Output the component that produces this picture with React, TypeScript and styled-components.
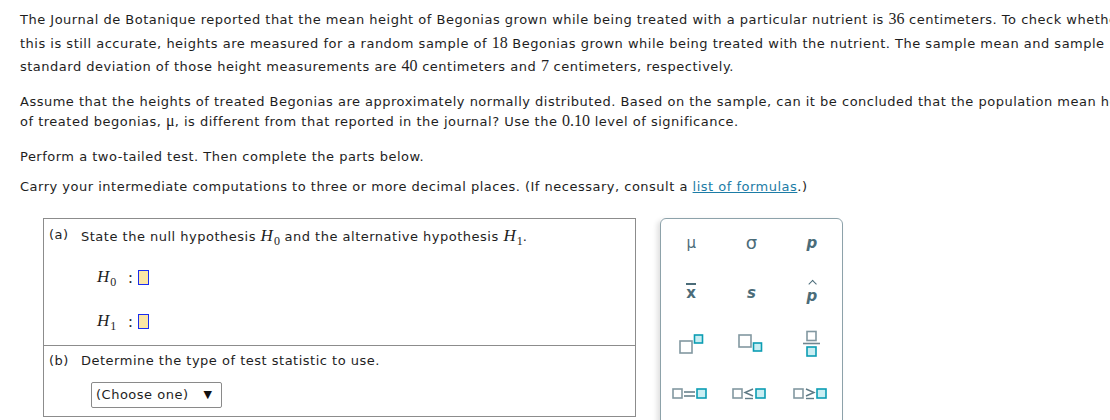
import React from "react";
import styled, { createGlobalStyle } from "styled-components";

const Global = createGlobalStyle`
  html, body { margin: 0; padding: 0; background: #fff; overflow: hidden; }
  body { font-family: "DejaVu Sans", Verdana, sans-serif; font-size: 13px; color: #1e1e1e; letter-spacing: 0.5px; }
`;

const Page = styled.div`
  width: 1200px;
  padding: 8px 0 0 20px;
`;

const Para = styled.p<{ $lh?: number; $mb?: number }>`
  margin: 0 0 ${(p) => p.$mb ?? 0}px 0;
  line-height: ${(p) => p.$lh ?? 20}px;
  white-space: nowrap;
`;

const Num = styled.span`
  font-family: "Liberation Serif", "Times New Roman", serif;
  font-size: 16px;
  line-height: 0;
  letter-spacing: 0;
`;

const Link = styled.a`
  color: #1c7ca6;
  text-decoration: underline;
`;

const Work = styled.div`
  display: flex;
  align-items: flex-start;
  gap: 24px;
  margin-left: 23px;
`;

const Box = styled.div`
  width: 591px;
  border: 1px solid #8c8c8c;
  border-bottom: none;
`;

const Section = styled.div<{ $h: number; $pt: number }>`
  height: ${(p) => p.$h}px;
  border-bottom: 1px solid #8c8c8c;
  box-sizing: border-box;
  padding: ${(p) => p.$pt}px 0 0 5px;
`;

const Prompt = styled.div`
  display: flex;
  line-height: 20px;
`;

const Label = styled.span<{ $raise?: boolean }>`
  width: 32px;
  flex: none;
  position: relative;
  top: ${(p) => (p.$raise ? -2 : 0)}px;
`;

const Hyp = styled.div<{ $mt: number }>`
  display: flex;
  align-items: center;
  margin: ${(p) => p.$mt}px 0 0 48px;
  height: 22px;
`;

const MathVar = styled.span`
  font-family: "Liberation Serif", "Times New Roman", serif;
  letter-spacing: 0;
  line-height: 0;
  white-space: nowrap;
`;

const MathH = styled.i`
  font-size: 17px;
`;

const Sub = styled.span`
  font-size: 12px;
  position: relative;
  top: 4px;
  margin-left: 1px;
`;

const Colon = styled.span`
  font-family: "Liberation Serif", "Times New Roman", serif;
  font-size: 16px;
  margin: 0 5px 0 12px;
`;

const Slot = styled.span`
  display: inline-block;
  width: 9px;
  height: 13px;
  background: #fbe6a6;
  border: 1px solid #1a2cf0;
`;

const Select = styled.div`
  display: flex;
  width: fit-content;
  align-items: center;
  gap: 15px;
  margin: 11px 0 0 42px;
  height: 24px;
  padding: 0 9px 0 4px;
  border: 1px solid #8a8a8a;
  border-radius: 2px;
  box-sizing: content-box;
`;

const Arrow = styled.span`
  font-size: 11px;
  color: #111;
  letter-spacing: 0;
`;

const Palette = styled.div`
  width: 181px;
  height: 240px;
  border: 1px solid #8da2aa;
  border-radius: 6px;
  box-shadow: -3px 2px 5px rgba(0, 0, 0, 0.12);
  display: grid;
  grid-template-columns: repeat(3, 1fr);
  grid-auto-rows: 50px;
  align-items: center;
  justify-items: center;
  color: #4b6c79;
  letter-spacing: 0;
`;

const Sym = styled.span<{ $italic?: boolean; $bold?: boolean; $size?: number }>`
  font-family: "DejaVu Sans", sans-serif;
  font-size: ${(p) => p.$size ?? 15}px;
  font-style: ${(p) => (p.$italic ? "italic" : "normal")};
  font-weight: ${(p) => (p.$bold ? 700 : 400)};
  position: relative;
  top: -1px;
`;

const Over = styled.span`
  display: inline-block;
  border-top: 2px solid #4b6c79;
  line-height: 14px;
  padding-top: 1px;
`;

const Hat = styled.span`
  display: inline-block;
  position: relative;
  top: 3px;
  &::before {
    content: "";
    position: absolute;
    left: 50%;
    top: -6px;
    width: 5px;
    height: 5px;
    border-left: 1.6px solid #4b6c79;
    border-top: 1.6px solid #4b6c79;
    transform: translateX(-40%) rotate(45deg);
  }
`;

const Cell = styled.div`
  display: flex;
  align-items: center;
  justify-content: center;
`;

const G = "#8298a1";
const C = "#0c9db3";
const CF = "#c9eef3";

const SupIcon = () => (
  <svg width="26" height="22" viewBox="0 0 26 22">
    <rect x="2" y="8" width="12" height="12" fill="#fff" stroke={G} strokeWidth="1.6" />
    <rect x="16.5" y="2" width="8" height="8" fill={CF} stroke={C} strokeWidth="1.6" />
  </svg>
);
const SubIcon = () => (
  <svg width="28" height="22" viewBox="0 0 28 22">
    <rect x="2" y="2" width="12" height="12" fill="#fff" stroke={G} strokeWidth="1.6" />
    <rect x="16.5" y="10" width="8" height="8" fill={CF} stroke={C} strokeWidth="1.6" />
  </svg>
);
const FracIcon = () => (
  <svg width="20" height="28" viewBox="0 0 20 28">
    <rect x="5" y="1.5" width="9" height="9" fill="#fff" stroke={G} strokeWidth="1.6" />
    <line x1="1" y1="13.5" x2="18" y2="13.5" stroke="#6f8690" strokeWidth="1.6" />
    <rect x="5" y="17" width="9" height="9" fill={CF} stroke={C} strokeWidth="1.6" />
  </svg>
);
const RelIcon = ({ op }: { op: "eq" | "le" | "ge" }) => (
  <svg width="38" height="14" viewBox="0 0 38 14">
    <rect x="1" y="2" width="9" height="9" fill="#fff" stroke={G} strokeWidth="1.6" />
    {op === "eq" && (
      <g stroke="#5e7a85" strokeWidth="1.5">
        <line x1="12" y1="5" x2="23" y2="5" />
        <line x1="12" y1="9" x2="23" y2="9" />
      </g>
    )}
    {op === "le" && (
      <g stroke="#5e7a85" strokeWidth="1.4" fill="none">
        <polyline points="21,2 13,5.5 21,9" />
        <line x1="13" y1="11.5" x2="21" y2="11.5" />
      </g>
    )}
    {op === "ge" && (
      <g stroke="#5e7a85" strokeWidth="1.4" fill="none">
        <polyline points="13,2 21,5.5 13,9" />
        <line x1="13" y1="11.5" x2="21" y2="11.5" />
      </g>
    )}
    <rect x={op === "eq" ? 25 : 24} y="2" width="9" height="9" fill={CF} stroke={C} strokeWidth="1.6" />
  </svg>
);

const H = ({ n }: { n: number }) => (
  <MathVar>
    <MathH>H</MathH>
    <Sub>{n}</Sub>
  </MathVar>
);

export default function App() {
  return (
    <>
      <Global />
      <Page>
        <Para $lh={23.5} $mb={13}>
          The Journal de Botanique reported that the mean height of Begonias grown while being treated with a particular nutrient is <Num>36</Num> centimeters. To check whether
          <br />
          this is still accurate, heights are measured for a random sample of <Num>18</Num> Begonias grown while being treated with the nutrient. The sample mean and sample
          <br />
          standard deviation of those height measurements are <Num>40</Num> centimeters and <Num>7</Num> centimeters, respectively.
        </Para>
        <Para $mb={15}>
          Assume that the heights of treated Begonias are approximately normally distributed. Based on the sample, can it be concluded that the population mean height
          <br />
          of treated begonias, <Num>μ</Num>, is different from that reported in the journal? Use the <Num>0.10</Num> level of significance.
        </Para>
        <Para $mb={10}>Perform a two-tailed test. Then complete the parts below.</Para>
        <Para $mb={21}>
          Carry your intermediate computations to three or more decimal places. (If necessary, consult a <Link>list of formulas</Link>.)
        </Para>
        <Work>
          <Box>
            <Section $h={127} $pt={8}>
              <Prompt>
                <Label $raise>(a)</Label>
                <span>
                  State the null hypothesis <H n={0} /> and the alternative hypothesis <H n={1} />.
                </span>
              </Prompt>
              <Hyp $mt={20}>
                <H n={0} />
                <Colon>:</Colon>
                <Slot />
              </Hyp>
              <Hyp $mt={22}>
                <H n={1} />
                <Colon>:</Colon>
                <Slot />
              </Hyp>
            </Section>
            <Section $h={71} $pt={5}>
              <Prompt>
                <Label>(b)</Label>
                <span>Determine the type of test statistic to use.</span>
              </Prompt>
              <Select>
                <span>(Choose one)</span>
                <Arrow>▼</Arrow>
              </Select>
            </Section>
          </Box>
          <Palette>
            <Sym>μ</Sym>
            <Sym $size={18}>σ</Sym>
            <Sym $italic $bold>p</Sym>
            <Sym $bold><Over>x</Over></Sym>
            <Sym $italic $bold>s</Sym>
            <Sym $italic $bold><Hat>p</Hat></Sym>
            <Cell><SupIcon /></Cell>
            <Cell><SubIcon /></Cell>
            <Cell><FracIcon /></Cell>
            <Cell><RelIcon op="eq" /></Cell>
            <Cell><RelIcon op="le" /></Cell>
            <Cell><RelIcon op="ge" /></Cell>
          </Palette>
        </Work>
      </Page>
    </>
  );
}
